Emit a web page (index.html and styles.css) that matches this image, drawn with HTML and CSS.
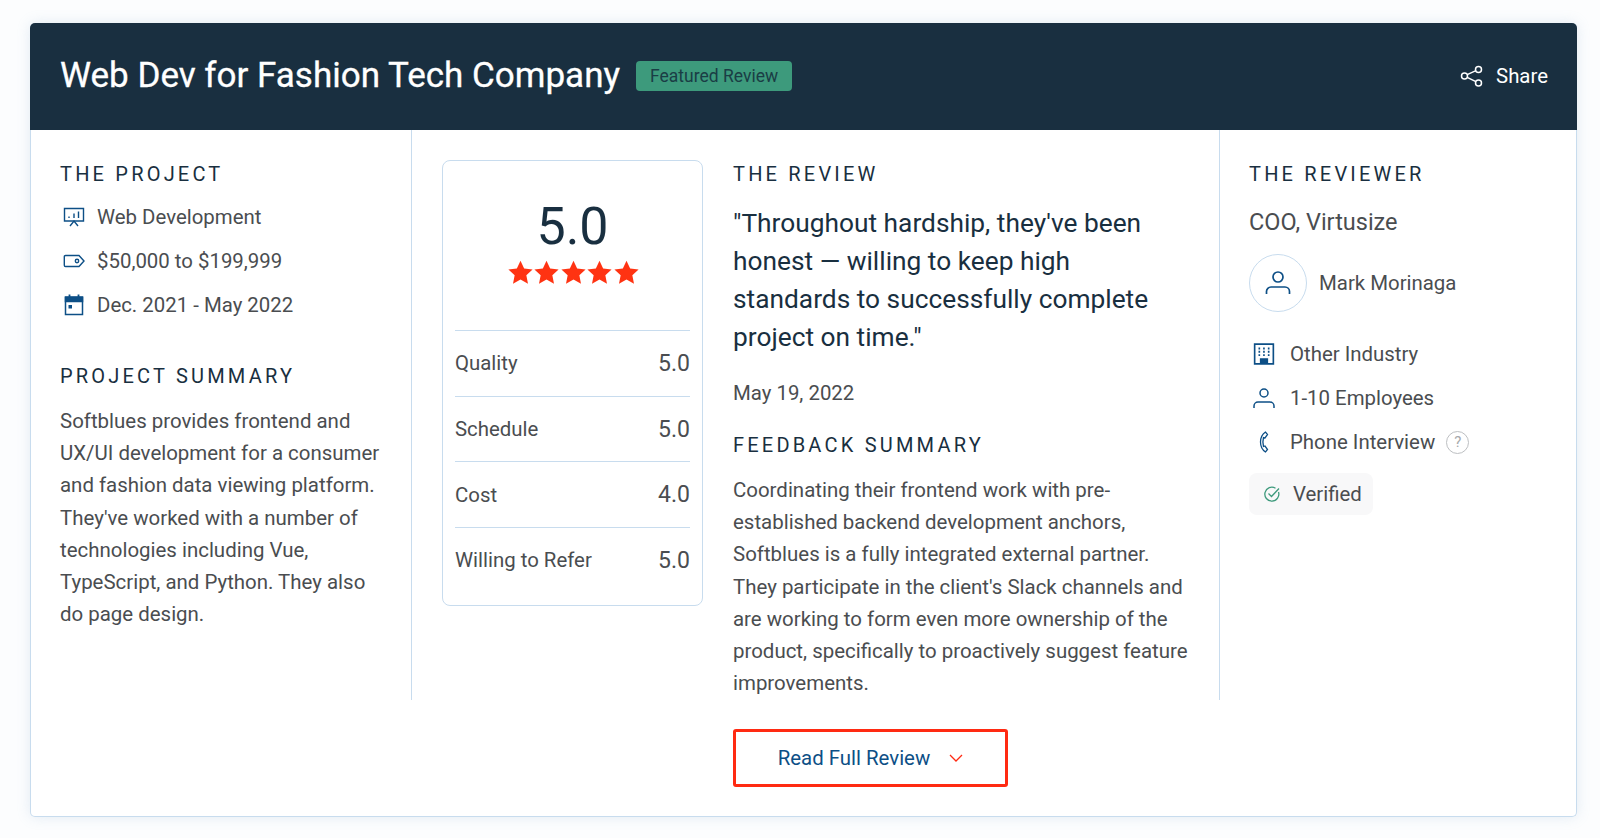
FILE: index.html
```html
<!DOCTYPE html>
<html lang="en">
<head>
  <meta charset="UTF-8">
  <meta name="viewport" content="width=device-width, initial-scale=1.0">
  <title>Web Dev for Fashion Tech Company</title>
  <link rel="stylesheet" href="styles.css">
</head>
<body>
  <div class="card">
    <!-- Header -->
    <div class="card-head">
      <h1>Web Dev for Fashion Tech Company</h1>
      <span class="badge">Featured Review</span>
      <a class="share">
        <svg width="24" height="24" viewBox="0 0 24 24" fill="none" stroke="#fff" stroke-width="1.5"><circle cx="18.5" cy="5.5" r="3"/><circle cx="18.5" cy="19" r="3"/><circle cx="4.5" cy="12" r="3"/><path d="M7.2 10.6l8.7-4M7.2 13.4l8.7 4.2"/></svg>
        Share
      </a>
    </div>

    <div class="card-body">
      <!-- The project -->
      <div class="col col-project">
        <h2>The Project</h2>
        <div class="info-row">
          <svg class="info-icon" viewBox="0 0 22 20" fill="none" stroke="#0d4f86" stroke-width="1.4"><path d="M1.5 1.5h19v12.5h-19z"/><path d="M6 11V9.5M11 11V6.5M15.5 11V4.5M7 19l4-5 4 5"/></svg>
          Web Development
        </div>
        <div class="info-row">
          <svg class="info-icon" viewBox="0 0 22 14" fill="none" stroke="#0d4f86" stroke-width="1.4"><path d="M2.5 1.5h13.5l5 5.5-5 5.500h-13.500a1.200 1.200 0 0 1-1.200-1.200v-8.600a1.200 1.200 0 0 1 1.200-1.200z"/><circle cx="14" cy="7" r="1.7"/></svg>
          $50,000 to $199,999
        </div>
        <div class="info-row">
          <svg class="info-icon" viewBox="0 0 20 22" fill="none" stroke="#0d4f86" stroke-width="1.5"><path d="M1.5 3.500h17v17h-17z"/><path d="M1.5 3h17v4.500h-17z" fill="#0d4f86"/><path d="M5.500 0.500v3M14.500 0.500v3" stroke-width="1.8"/><rect x="4.500" y="11" width="3.500" height="3.500" fill="#0d4f86" stroke="none"/></svg>
          Dec. 2021 - May 2022
        </div>
        <h2 class="summary-title">Project Summary</h2>
        <p class="text">Softblues provides frontend and UX/UI development for a consumer and fashion data viewing platform. They've worked with a number of technologies including Vue, TypeScript, and Python. They also do page design.</p>
      </div>

      <!-- The review -->
      <div class="col col-review">
        <div class="rating-box">
          <div class="rating-top">
            <div class="rating-num">5.0</div>
            <div class="stars">
              <svg viewBox="0 0 24 24"><path d="M12 .6l3.500 7.500 8.100 1-6 5.600 1.600 8.100-7.200-4-7.200 4 1.600-8.100-6-5.600 8.100-1z"/></svg>
              <svg viewBox="0 0 24 24"><path d="M12 .6l3.500 7.500 8.100 1-6 5.600 1.600 8.100-7.200-4-7.200 4 1.600-8.100-6-5.600 8.100-1z"/></svg>
              <svg viewBox="0 0 24 24"><path d="M12 .6l3.500 7.500 8.100 1-6 5.600 1.600 8.100-7.200-4-7.200 4 1.600-8.100-6-5.600 8.100-1z"/></svg>
              <svg viewBox="0 0 24 24"><path d="M12 .6l3.500 7.500 8.100 1-6 5.600 1.600 8.100-7.200-4-7.200 4 1.600-8.100-6-5.600 8.100-1z"/></svg>
              <svg viewBox="0 0 24 24"><path d="M12 .6l3.500 7.500 8.100 1-6 5.600 1.600 8.100-7.200-4-7.200 4 1.600-8.100-6-5.600 8.100-1z"/></svg>
            </div>
          </div>
          <div class="score-row"><span>Quality</span><b>5.0</b></div>
          <div class="score-row"><span>Schedule</span><b>5.0</b></div>
          <div class="score-row"><span>Cost</span><b>4.0</b></div>
          <div class="score-row"><span>Willing to Refer</span><b>5.0</b></div>
        </div>
        <div class="review-text">
          <h2>The Review</h2>
          <p class="quote">"Throughout hardship, they've been honest — willing to keep high standards to successfully complete project on time."</p>
          <p class="date">May 19, 2022</p>
          <h2 class="feedback-title">Feedback Summary</h2>
          <p class="text">Coordinating their frontend work with pre-established backend development anchors, Softblues is a fully integrated external partner. They participate in the client's Slack channels and are working to form even more ownership of the product, specifically to proactively suggest feature improvements.</p>
        </div>
      </div>

      <!-- The reviewer -->
      <div class="col col-reviewer">
        <h2>The Reviewer</h2>
        <div class="role">COO, Virtusize</div>
        <div class="person">
          <div class="avatar">
            <svg width="28" height="28" viewBox="0 0 28 28" fill="none" stroke="#0d4f86" stroke-width="1.7"><circle cx="14" cy="8" r="5"/><path d="M2.500 25v-2.500a4.500 4.500 0 0 1 4.500-4.500h14a4.500 4.500 0 0 1 4.500 4.500v2.500"/></svg>
          </div>
          Mark Morinaga
        </div>
        <div class="meta-row">
          <svg class="meta-icon" viewBox="0 0 20 20" fill="none" stroke="#0d4f86" stroke-width="1.5"><path d="M1.500 1h17v18h-17z"/><path d="M5 5h1.500M9.200 5h1.500M13.500 5h1.500M5 8h1.500M9.200 8h1.500M13.500 8h1.500M5 11h1.500M9.200 11h1.500M13.500 11h1.500" stroke-width="1.7"/><path d="M7 19v-4.500h6v4.500" fill="#0d4f86"/></svg>
          Other Industry
        </div>
        <div class="meta-row">
          <svg class="meta-icon" viewBox="0 0 22 22" fill="none" stroke="#0d4f86" stroke-width="1.5"><circle cx="11" cy="6" r="4"/><path d="M1 21v-2a4 4 0 0 1 4-4h12a4 4 0 0 1 4 4v2"/></svg>
          1-10 Employees
        </div>
        <div class="meta-row">
          <svg class="meta-icon" viewBox="0 0 22 22" fill="none" stroke="#0d4f86" stroke-width="1.3"><path d="M12.500 1c-3 2-5 5.500-5 10s2 8 5 10l2-2.500-2.500-3.500-1.500.5c-.8-3-.8-6 0-9l1.500.5 2.500-3.500z"/></svg>
          Phone Interview
          <span class="help">?</span>
        </div>
        <div class="verified">
          <svg width="18" height="18" viewBox="0 0 18 18" fill="none" stroke="#3d9a7c" stroke-width="1.3"><path d="M15.500 7a7 7 0 1 1-3-3.800"/><path d="M5.500 8.500l3 3 7.500-8"/></svg>
          Verified
        </div>
      </div>
    </div>

    <div class="card-foot">
      <a class="read-btn">
        Read Full Review
        <svg width="14" height="8" viewBox="0 0 14 8" fill="none" stroke="#ff2a12" stroke-width="1.3"><path d="M1 1l6 6 6-6"/></svg>
      </a>
    </div>
  </div>
</body>
</html>
```

FILE: styles.css
```css
/* Page */
body {
  margin: 0;
  padding: 23px 23px 21px 30px;
  background: #fcfdfe;
  font-family: Roboto, Arial, sans-serif;
  color: #4a4d50;
}

/* Card */
.card {
  height: 794px;
  box-sizing: border-box;
  background: #fff;
  border: 1px solid #c8dcee;
  border-top: 0;
  border-radius: 5px;
  box-shadow: 0 0 14px rgba(120, 160, 200, 0.2);
  display: flex;
  flex-direction: column;
}

.card-head {
  height: 107px;
  flex: none;
  box-sizing: border-box;
  margin: 0 -1px;
  padding: 0 29px 2px 30px;
  background: #192f40;
  border-radius: 5px 5px 0 0;
  display: flex;
  align-items: center;
}

.card-head h1 {
  margin: 0;
  font-size: 35px;
  font-weight: 400;
  color: #fff;
  -webkit-text-stroke: 0.3px #fff;
}

.badge {
  margin-left: 16px;
  padding: 0 14px;
  height: 30px;
  line-height: 30px;
  font-size: 17.5px;
  color: #1a3d45;
  background: #3d9a7c;
  border-radius: 4px;
}

.share {
  margin-left: auto;
  display: flex;
  align-items: center;
  gap: 12px;
  font-size: 20.4px;
  color: #fff;
}

/* Columns */
.card-body {
  height: 570px;
  flex: none;
  display: flex;
}

.col {
  box-sizing: border-box;
  padding-top: 32px;
}

.col-project {
  width: 381px;
  padding-left: 29px;
  padding-right: 30px;
  border-right: 1px solid #c8dcee;
}

.col-review {
  width: 808px;
  padding-left: 30px;
  padding-right: 28px;
  border-right: 1px solid #c8dcee;
  display: flex;
  gap: 30px;
  align-items: flex-start;
}

.col-reviewer {
  flex: 1;
  padding-left: 29px;
}

h2 {
  margin: 0;
  font-size: 20px;
  line-height: 24px;
  font-weight: 400;
  letter-spacing: 3.2px;
  text-transform: uppercase;
  color: #192f40;
}

.info-row {
  display: flex;
  align-items: center;
  height: 44px;
  font-size: 20.4px;
}

.col-project h2 + .info-row {
  margin-top: 9px;
}

.info-icon {
  width: 22px;
  height: 22px;
  margin: 0 12px 0 3px;
}

.summary-title {
  margin-top: 37px;
}

.text {
  margin: 17px 0 0;
  font-size: 20.45px;
  line-height: 32.2px;
}

/* Rating box */
.rating-box {
  width: 261px;
  height: 446px;
  flex: none;
  box-sizing: border-box;
  margin-top: -2px;
  padding: 0 12px;
  border: 1.5px solid #c8dcee;
  border-radius: 8px;
}

.rating-top {
  height: 169px;
  padding-top: 38px;
  box-sizing: border-box;
  text-align: center;
}

.rating-num {
  font-size: 52px;
  line-height: 56px;
  color: #192f40;
}

.stars {
  margin-top: 5px;
  padding-left: 1px;
  display: flex;
  justify-content: center;
  gap: 1.5px;
}

.stars svg {
  width: 25px;
  height: 25px;
  fill: #ff3312;
}

.score-row {
  height: 65.7px;
  box-sizing: border-box;
  border-top: 1px solid #c8dcee;
  display: flex;
  align-items: center;
  justify-content: space-between;
  font-size: 20.4px;
}

.score-row b {
  font-size: 23px;
  font-weight: 400;
}

/* Review text */
.review-text {
  flex: 1;
}

.quote {
  margin: 18px 0 0;
  font-size: 26.3px;
  line-height: 38px;
  color: #192f40;
}

.date {
  margin: 21px 0 0;
  font-size: 20.4px;
  line-height: 32px;
}

.feedback-title {
  margin-top: 24px;
}

/* Reviewer */
.role {
  margin-top: 20px;
  font-size: 23.5px;
  line-height: 32px;
}

.person {
  margin-top: 16px;
  display: flex;
  align-items: center;
  gap: 12px;
  font-size: 20.4px;
}

.avatar {
  width: 58px;
  height: 58px;
  box-sizing: border-box;
  border: 1px solid #c8dcee;
  border-radius: 50%;
  display: flex;
  align-items: center;
  justify-content: center;
}

.meta-row {
  display: flex;
  align-items: center;
  height: 44px;
  font-size: 20.4px;
}

.person + .meta-row {
  margin-top: 20px;
}

.meta-icon {
  width: 22px;
  height: 22px;
  margin: 0 15px 0 4px;
  flex: none;
}

.help {
  margin-left: 11px;
  width: 23px;
  height: 23px;
  box-sizing: border-box;
  border: 1.5px solid #bdbfc2;
  border-radius: 50%;
  font-size: 15px;
  line-height: 20px;
  text-align: center;
  color: #a6a9ac;
}

.verified {
  margin-top: 9px;
  width: 124px;
  height: 42px;
  box-sizing: border-box;
  padding-left: 14px;
  background: #f8f8f9;
  border-radius: 8px;
  display: flex;
  align-items: center;
  gap: 12px;
  font-size: 20.4px;
}

/* Footer */
.card-foot {
  flex: 1;
  padding: 29px 0 0 702px;
}

.read-btn {
  width: 275px;
  height: 58px;
  box-sizing: border-box;
  border: 3px solid #ff2a12;
  border-radius: 3px;
  display: flex;
  align-items: center;
  justify-content: center;
  gap: 19px;
  font-size: 20.4px;
  color: #0d4f86;
}
```
